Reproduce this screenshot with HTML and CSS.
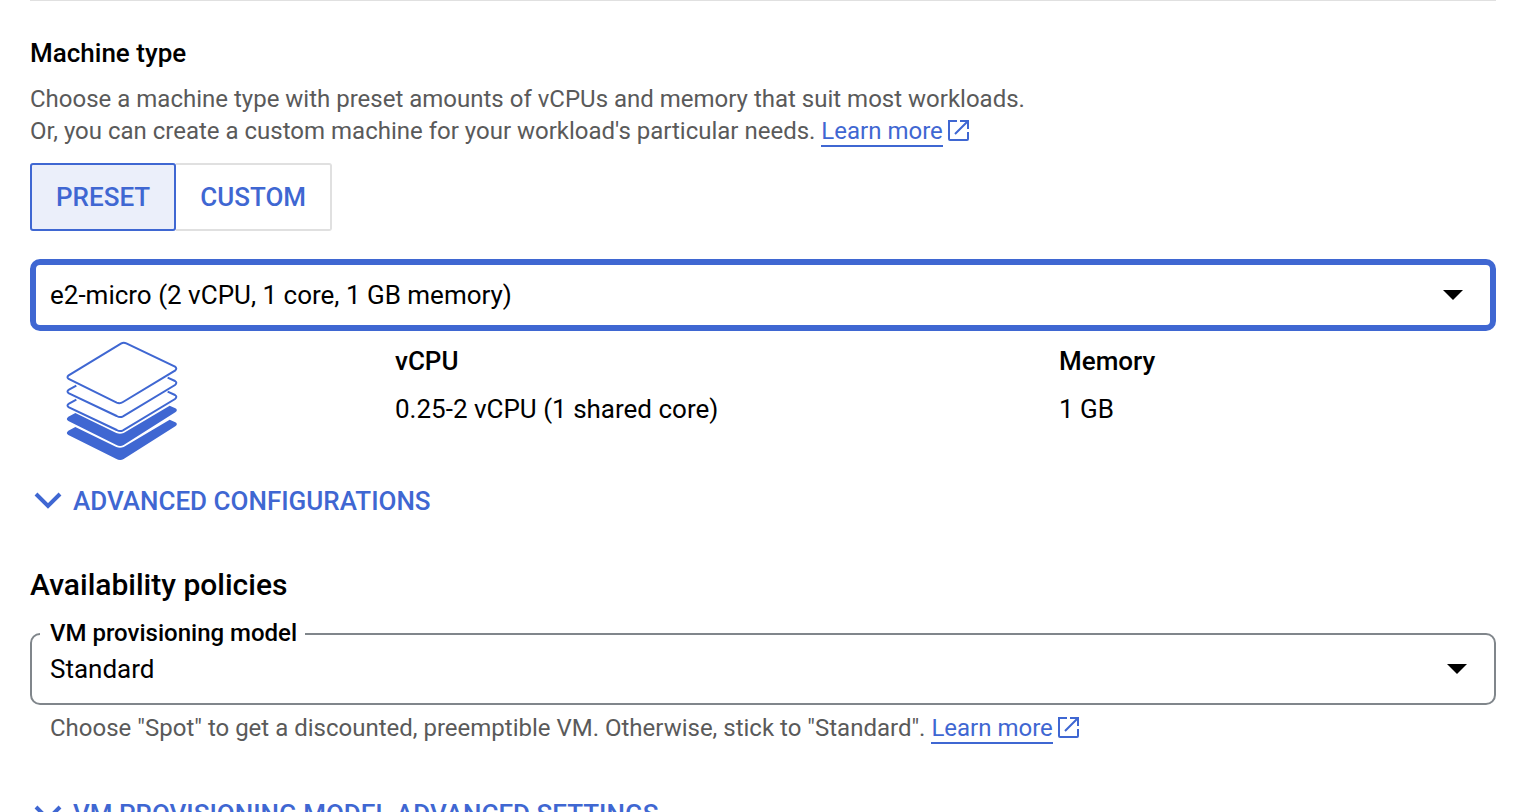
FILE: index.html
```html
<!DOCTYPE html>
<html lang="en">
<head>
<meta charset="utf-8">
<meta name="viewport" content="width=device-width, initial-scale=1">
<title>Machine configuration</title>
<link rel="stylesheet" href="styles.css">
</head>
<body>
<main class="page">
  <section class="machine">
    <h2 class="title">Machine type</h2>
    <p class="description">Choose a machine type with preset amounts of vCPUs and memory that suit most workloads.<br>Or, you can create a custom machine for your workload's particular needs. <a class="link" href="#machine-types">Learn more</a><svg class="external" viewBox="0 0 21 21" aria-hidden="true"><path d="M9 1H1V19Q1 20 2 20H19Q20 20 20 19V12M12 1H20V9M20 1L7 14"/></svg></p>
    <div class="toggle">
      <button class="toggle-button selected" type="button" aria-pressed="true">PRESET</button>
      <button class="toggle-button" type="button" aria-pressed="false">CUSTOM</button>
    </div>
    <div class="field">
      <select class="select focused" aria-label="Machine type">
        <option>e2-micro (2 vCPU, 1 core, 1 GB memory)</option>
      </select>
      <svg class="caret caret-focused" viewBox="0 0 20 10" aria-hidden="true"><path d="M0 0H20L10 10Z"/></svg>
    </div>
    <div class="specs">
      <svg class="layers" viewBox="138 33 336 360" aria-hidden="true">
        <path class="outline" d="M304 40Q311 36 319 40L465 110Q472 115 466 121L309 216Q300 222 290 218L146 147Q139 142 146 136Z"/>
        <path class="outline" d="M169 167L147 179Q138 184 147 190L290 258Q300 264 309 259L465 165Q473 158 465 153L443 143"/>
        <path class="outline" d="M169 209L147 221Q138 226 147 232L290 300Q300 306 309 301L465 207Q473 200 465 195L443 185"/>
        <path class="solid" d="M166 249L145 260Q136 267 145 273L288 344Q300 351 311 345L466 247Q475 240 466 235L449 227L311 309Q300 314 289 309Z"/>
        <path class="solid" d="M166 291L145 302Q136 309 145 315L288 386Q300 393 311 387L466 289Q475 282 466 277L449 269L311 351Q300 356 289 351Z"/>
      </svg>
      <div class="spec">
        <h3 class="spec-name">vCPU</h3>
        <p class="spec-value">0.25-2 vCPU (1 shared core)</p>
      </div>
      <div class="spec">
        <h3 class="spec-name">Memory</h3>
        <p class="spec-value">1 GB</p>
      </div>
    </div>
    <button class="expander" type="button"><svg class="chevron" viewBox="0 0 28 20" aria-hidden="true"><path d="M2 3L14 15L26 3"/></svg>ADVANCED CONFIGURATIONS</button>
  </section>
  <section class="policies">
    <h2 class="section-title">Availability policies</h2>
    <div class="field">
      <label class="field-label" for="provisioning">VM provisioning model</label>
      <select class="select" id="provisioning">
        <option>Standard</option>
      </select>
      <svg class="caret" viewBox="0 0 20 10" aria-hidden="true"><path d="M0 0H20L10 10Z"/></svg>
    </div>
    <p class="hint">Choose "Spot" to get a discounted, preemptible VM. Otherwise, stick to "Standard". <a class="link" href="#spot">Learn more</a><svg class="external" viewBox="0 0 21 21" aria-hidden="true"><path d="M9 1H1V19Q1 20 2 20H19Q20 20 20 19V12M12 1H20V9M20 1L7 14"/></svg></p>
    <button class="expander" type="button"><svg class="chevron" viewBox="0 0 28 20" aria-hidden="true"><path d="M2 3L14 15L26 3"/></svg>VM PROVISIONING MODEL ADVANCED SETTINGS</button>
  </section>
</main>
</body>
</html>
```
FILE: styles.css
```css
* {
  box-sizing: border-box;
}

body {
  margin: 0;
  height: 100vh;
  overflow: hidden;
  background: #fff;
  color: #000;
  font-family: Roboto, sans-serif;
  font-size: 26px;
  line-height: 32px;
}

h2, h3, p {
  margin: 0;
  font-weight: 400;
}

.page {
  padding: 0 26px 0 30px;
}

.machine {
  padding-top: 36px;
  border-top: 1px solid #e0e0e0;
}

.title {
  font-size: 26px;
  font-weight: 500;
}

.description {
  margin-top: 14px;
  color: #5a5a5a;
  font-size: 24px;
}

.link {
  color: #3f67d2;
  text-decoration: none;
  border-bottom: 2px solid #3f67d2;
}

.external {
  width: 21px;
  height: 21px;
  margin-left: 5px;
  vertical-align: -2px;
  fill: none;
  stroke: #3f67d2;
  stroke-width: 2;
}

.toggle {
  display: flex;
  margin-top: 16px;
}

.toggle-button {
  height: 68px;
  padding: 0 24px;
  border: 2px solid #e0e0e0;
  border-left: 0;
  border-radius: 0 3px 3px 0;
  background: #fff;
  color: #3f67d2;
  font: 500 26px/32px Roboto, sans-serif;
}

.toggle-button.selected {
  border: 2px solid #3f67d2;
  border-radius: 3px;
  background: #ebeffa;
}

.field {
  position: relative;
  margin-top: 28px;
}

.select {
  display: block;
  width: 100%;
  height: 72px;
  padding: 0 60px 0 18px;
  appearance: none;
  border: 2px solid #80868b;
  border-radius: 10px;
  outline: 0;
  background: #fff;
  color: #000;
  font: 400 26px/32px Roboto, sans-serif;
}

.select.focused {
  padding-left: 14px;
  border: 6px solid #3f67d2;
}

.caret {
  position: absolute;
  top: 31px;
  right: 29px;
  width: 20px;
  height: 10px;
  pointer-events: none;
}

.caret-focused {
  right: 33px;
}

.field-label {
  position: absolute;
  top: -16px;
  left: 10px;
  padding: 0 8px 0 10px;
  background: #fff;
  font-size: 24px;
  font-weight: 500;
}

.specs {
  display: grid;
  grid-template-columns: 365fr 664fr 437fr;
  margin-top: 10px;
}

.layers {
  width: 112px;
  height: 120px;
  margin-left: 36px;
}

.outline {
  fill: none;
  stroke: #3f67d2;
  stroke-width: 6;
}

.solid {
  fill: #3f67d2;
}

.spec {
  padding-top: 4px;
}

.spec-name {
  font-size: 26px;
  font-weight: 500;
}

.spec-value {
  margin-top: 16px;
}

.expander {
  display: flex;
  align-items: center;
  gap: 11px;
  margin-top: 24px;
  padding: 0 0 0 4px;
  border: 0;
  background: none;
  color: #3f67d2;
  font: 500 26px/32px Roboto, sans-serif;
}

.chevron {
  width: 28px;
  height: 20px;
  fill: none;
  stroke: #3f67d2;
  stroke-width: 4;
}

.policies {
  padding-top: 48px;
}

.section-title {
  font-size: 30px;
  font-weight: 500;
  line-height: 40px;
}

.hint {
  margin-top: 7px;
  padding-left: 20px;
  color: #5a5a5a;
  font-size: 24px;
}

.policies .expander {
  margin-top: 54px;
}
```
